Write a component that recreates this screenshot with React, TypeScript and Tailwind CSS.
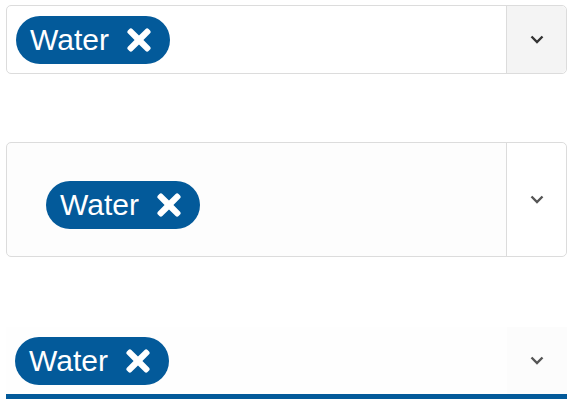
import React from "react";
import { FaTimes } from "react-icons/fa";

const Chevron = ({ color }: { color: string }) => (
  <svg width="16" height="9" viewBox="0 0 16 9" fill="none">
    <path d="M2.5 1.5 L8 7 L13.5 1.5" stroke={color} strokeWidth="2.4" />
  </svg>
);

const Chip = () => (
  <div className="flex items-center h-[48px] w-[154px] pl-[14px] rounded-full bg-[#035a9a] text-white">
    <span className="text-[30px] leading-none font-['Liberation_Sans',Arial,sans-serif]">Water</span>
    <FaTimes className="ml-[13px] w-[34px] h-[34px]" />
  </div>
);

const App = () => {
  return (
    <div className="w-[573px] h-[405px] bg-white px-[6px] pt-[5px]">
      {/* Boxed select with grey toggle */}
      <div className="flex h-[69px] border border-[#dcdcdc] rounded-[5px]">
        <div className="flex-1 flex items-center pl-[9px]">
          <Chip />
        </div>
        <div className="w-[60px] flex items-center justify-center border-l border-[#dcdcdc] bg-[#f4f4f4] rounded-r-[5px]">
          <Chevron color="#333" />
        </div>
      </div>

      {/* Roomy select */}
      <div className="flex h-[115px] mt-[68px] border border-[#dcdcdc] rounded-[5px] bg-[#fdfdfd]">
        <div className="flex-1 flex items-center pl-[39px] pt-[10px]">
          <Chip />
        </div>
        <div className="w-[60px] flex items-center justify-center border-l border-[#dcdcdc] bg-white rounded-r-[5px]">
          <Chevron color="#555" />
        </div>
      </div>

      {/* Underlined select */}
      <div className="flex h-[72px] mt-[70px] border-b-[5px] border-[#035a9a]">
        <div className="flex-1 flex items-center pl-[9px] bg-[#fefefe]">
          <Chip />
        </div>
        <div className="w-[60px] flex items-center justify-center bg-[#fcfcfc]">
          <Chevron color="#555" />
        </div>
      </div>
    </div>
  );
};

export default App;
